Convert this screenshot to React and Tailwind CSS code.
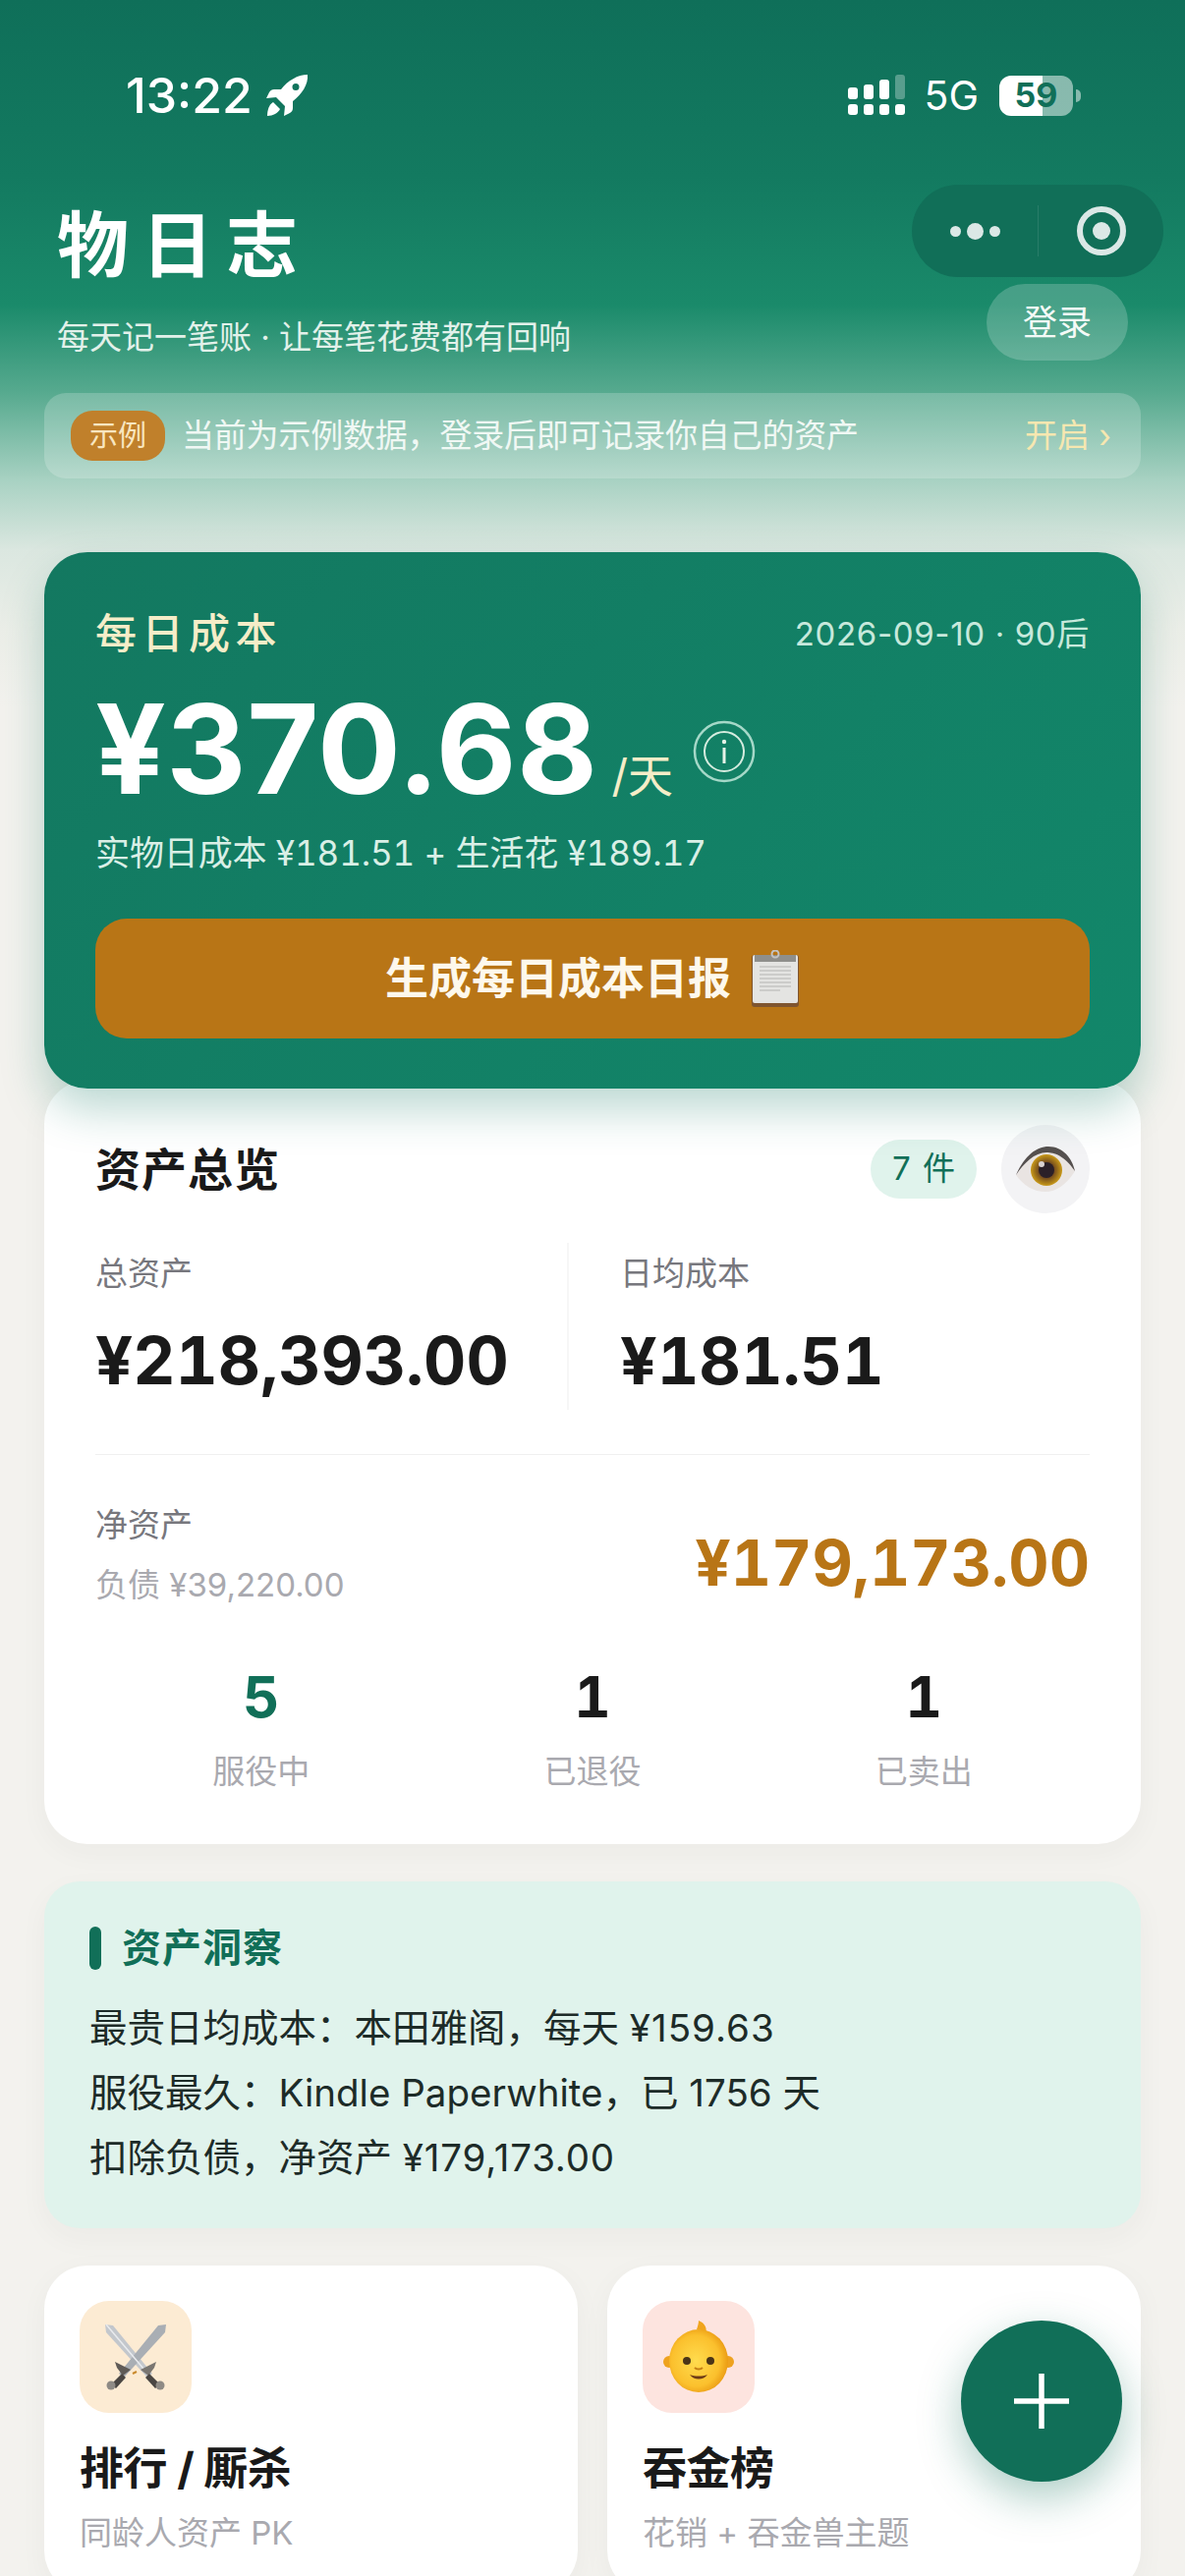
import React from "react";

const FONT = "font-[Inter,'Noto_Sans_CJK_SC',sans-serif]";

function Rocket() {
  return (
    <svg width="44" height="44" viewBox="0 0 44 44" className="ml-[13px]">
      <path
        fillRule="evenodd"
        fill="#fff"
        d="M43 1C33 1 23 7 16 16L9 16C7 16 5 17 4 19L1 25L11 24L20 33L19 43L25 40C27 39 28 37 28 35L28 28C37 21 44 11 43 1ZM31 10A3.5 3.5 0 1 1 31 17A3.5 3.5 0 1 1 31 10Z"
      />
      <path fill="#fff" d="M8 29C4 31 2 37 2 43C8 43 13 40 15 36Z" />
    </svg>
  );
}

function Signal() {
  return (
    <svg width="60" height="42" viewBox="0 0 60 42">
      <rect x="0" y="13" width="10" height="12" rx="3" fill="#fff" />
      <rect x="16" y="10" width="10" height="15" rx="3" fill="#fff" />
      <rect x="32" y="5" width="10" height="20" rx="3" fill="#fff" />
      <rect x="48" y="0" width="10" height="25" rx="3" fill="#fff" fillOpacity="0.3" />
      <rect x="0" y="30" width="10" height="11" rx="3" fill="#fff" />
      <rect x="16" y="30" width="10" height="11" rx="3" fill="#fff" />
      <rect x="32" y="30" width="10" height="11" rx="3" fill="#fff" />
      <rect x="48" y="30" width="10" height="11" rx="3" fill="#fff" />
    </svg>
  );
}

function InfoIcon() {
  return (
    <svg width="64" height="64" viewBox="0 0 64 64" fill="none" className="ml-[20px] mb-[20px]">
      <circle cx="32" cy="32" r="30" stroke="#a5d8c8" strokeWidth="2.5" />
      <circle cx="32" cy="32" r="20" stroke="#d5ecdf" strokeWidth="2" />
      <circle cx="32" cy="22" r="2.2" fill="#e6f3e8" />
      <rect x="30.5" y="28" width="3" height="16" fill="#e6f3e8" />
    </svg>
  );
}

function ClipboardEmoji() {
  return (
    <svg width="50" height="58" viewBox="0 0 50 58" className="ml-[20px]">
      <rect x="1" y="5" width="48" height="53" rx="3" fill="#7f5530" />
      <rect x="2" y="5" width="46" height="49" rx="2" fill="#e4e4e2" />
      <rect x="4" y="5" width="42" height="7" fill="#8f8f8c" />
      <circle cx="25" cy="4" r="3.5" fill="none" stroke="#c4c4c4" strokeWidth="2" />
      <path d="M9 17H41M9 21H41M9 25H41M9 29H41M9 33H41M9 37H41M9 41H30" stroke="#b4b4b2" strokeWidth="1.2" />
    </svg>
  );
}

function EyeEmoji() {
  return (
    <svg width="62" height="48" viewBox="0 0 62 48">
      <defs>
        <radialGradient id="iris" cx="50%" cy="50%" r="50%">
          <stop offset="0.45" stopColor="#6b4320" />
          <stop offset="0.8" stopColor="#a77a18" />
          <stop offset="1" stopColor="#c99a1c" />
        </radialGradient>
      </defs>
      <path d="M1 30C10 10 22 1 34 1C48 1 58 12 61 26C52 40 42 47 31 47C19 47 9 41 1 30Z" fill="#e9e4e2" />
      <path d="M1 30C10 10 22 1 34 1C48 1 58 12 61 26C50 10 40 7 32 7C20 7 9 18 1 30Z" fill="#55504f" />
      <circle cx="32" cy="25" r="16" fill="url(#iris)" />
      <circle cx="32" cy="25" r="8" fill="#2b2028" />
      <circle cx="27" cy="19" r="3" fill="#d9d2d2" />
    </svg>
  );
}

function SwordsEmoji() {
  return (
    <svg width="66" height="70" viewBox="0 0 66 70">
      <path d="M2 2L10 3L50 52L45 56L3 10Z" fill="#c3c7cc" />
      <path d="M64 2L56 3L16 52L21 56L63 10Z" fill="#a9aeb4" />
      <path d="M3 2L47 54" stroke="#e9ebee" strokeWidth="1.5" />
      <path d="M38 48L54 40L52 46L46 54Z" fill="#7a7671" />
      <path d="M28 48L12 40L14 46L20 54Z" fill="#5f5b57" />
      <path d="M47 52L58 63L53 67L43 56Z" fill="#4a4643" />
      <path d="M19 52L8 63L13 67L23 56Z" fill="#4a4643" />
      <circle cx="58" cy="64" r="4.5" fill="#8e8a85" />
      <circle cx="8" cy="64" r="4.5" fill="#8e8a85" />
      <path d="M30 52L34 50" stroke="#c98a2c" strokeWidth="2" />
    </svg>
  );
}

function BabyEmoji() {
  return (
    <svg width="72" height="74" viewBox="0 0 72 74">
      <defs>
        <radialGradient id="babyFace" cx="45%" cy="50%" r="58%">
          <stop offset="0" stopColor="#ffdc4e" />
          <stop offset="0.7" stopColor="#fbc02d" />
          <stop offset="1" stopColor="#e8950f" />
        </radialGradient>
      </defs>
      <circle cx="6" cy="42" r="6" fill="#eea21f" />
      <circle cx="66" cy="42" r="6" fill="#eea21f" />
      <path d="M36 0C43 3 45 8 43 14C41 11 38 9 34 9C35 6 36 3 36 0Z" fill="#f0a51e" />
      <ellipse cx="36" cy="41" rx="30" ry="32" fill="url(#babyFace)" />
      <circle cx="24" cy="41" r="4" fill="#4a3418" />
      <circle cx="48" cy="41" r="4" fill="#4a3418" />
      <path d="M32 48C34 50 38 50 40 48" stroke="#c57f14" strokeWidth="2" fill="none" />
      <path d="M27 55C31 61 41 61 45 55C40 57 32 57 27 55Z" fill="#6d3b16" />
    </svg>
  );
}

function Stat({ value, label, green }) {
  return (
    <div className="flex flex-col items-center">
      <div className={`text-[58px] leading-[60px] font-bold ${green ? "text-[#116f58]" : "text-[#1a1a1a]"}`}>{value}</div>
      <div className="mt-[24px] text-[33px] leading-[44px] text-[#a9a9af]">{label}</div>
    </div>
  );
}

function EntryCard({ icon, iconBg, title, sub }) {
  return (
    <div className="bg-white rounded-[44px] pl-[36px] pt-[36px] pb-[40px] shadow-[0_8px_30px_rgba(60,60,50,0.04)]">
      <div className={`w-[114px] h-[114px] rounded-[30px] flex items-center justify-center ${iconBg}`}>{icon}</div>
      <div className="mt-[29px] text-[45px] leading-[56px] font-bold tracking-[-0.5px] text-[#1a1a1a]">{title}</div>
      <div className="mt-[15px] text-[33px] leading-[44px] text-[#a9a9af]">{sub}</div>
    </div>
  );
}

export default function App() {
  return (
    <div className={`relative w-[1206px] h-[2622px] overflow-hidden text-white bg-[linear-gradient(180deg,#0f6f59_0px,#137a60_180px,#1a8a6a_310px,#57aa8f_400px,#a9d2c3_490px,#dbe7e0_560px,#ebeee8_640px,#f3f2ee_720px)] ${FONT}`}>
      {/* status bar */}
      <div className="flex items-center justify-between pt-[76px] pl-[128px] pr-[106px] h-[118px]">
        <div className="flex items-center">
          <span className="text-[50px] leading-[42px] font-medium">13:22</span>
          <Rocket />
        </div>
        <div className="flex items-center">
          <Signal />
          <span className="ml-[17px] text-[41px] leading-[42px]">5G</span>
          <div className="ml-[21px] w-[75px] h-[41px] rounded-[12px] flex items-center justify-center bg-[linear-gradient(90deg,#fff_59%,rgba(255,255,255,0.5)_59%)] text-[34px] leading-none font-bold text-[#116f58]">
            59
          </div>
          <div className="ml-[3px] w-[5px] h-[13px] rounded-r-full bg-white/50" />
        </div>
      </div>

      {/* mini program capsule */}
      <div className="absolute top-[188px] right-[22px] w-[256px] h-[94px] rounded-[47px] bg-[#116f58] flex items-center">
        <div className="w-[128px] flex items-center justify-center gap-[6px]">
          <span className="w-[11px] h-[11px] rounded-full bg-[#dbe8e6]" />
          <span className="w-[17px] h-[17px] rounded-full bg-[#dbe8e6]" />
          <span className="w-[11px] h-[11px] rounded-full bg-[#dbe8e6]" />
        </div>
        <div className="w-px h-[52px] bg-white/10" />
        <div className="flex-1 flex items-center justify-center">
          <div className="w-[50px] h-[50px] rounded-full border-[6px] border-[#dbe8e6] flex items-center justify-center">
            <span className="w-[18px] h-[18px] rounded-full bg-[#dbe8e6]" />
          </div>
        </div>
      </div>

      {/* header */}
      <div className="mt-[90px] pl-[58px] pr-[58px] flex items-end justify-between">
        <div>
          <div className="text-[73px] leading-[84px] font-bold tracking-[13px]">物日志</div>
          <div className="mt-[29px] text-[33px] leading-[44px] text-[#e2f1ea]">每天记一笔账 · 让每笔花费都有回响</div>
        </div>
        <div className="w-[144px] h-[78px] -mb-[2px] rounded-[39px] bg-white/20 flex items-center justify-center text-[35px] text-[#f4faf7]">登录</div>
      </div>

      {/* sample data notice */}
      <div className="mt-[35px] mx-[45px] h-[87px] rounded-[22px] bg-white/20 flex items-center pl-[27px] pr-[30px]">
        <span className="w-[96px] h-[51px] rounded-[22px] bg-[#c0802b] flex items-center justify-center text-[29px] text-[#f8e6c0]">示例</span>
        <span className="ml-[17px] text-[33px] tracking-[-0.2px] text-[#f0f8f4]">当前为示例数据，登录后即可记录你自己的资产</span>
        <span className="ml-auto text-[33px] text-[#f6e7b0]">开启 ›</span>
      </div>

      {/* daily cost hero */}
      <div className="relative z-10 mt-[75px] mx-[45px] rounded-[44px] px-[52px] pt-[58px] pb-[51px] bg-[linear-gradient(135deg,#137860,#12876a)] shadow-[0_22px_44px_rgba(18,120,96,0.28)]">
        <div className="flex items-center justify-between">
          <span className="text-[42px] leading-[50px] font-medium tracking-[5.5px] text-[#f5edc8]">每日成本</span>
          <span className="text-[33px] leading-[50px] tracking-[0.65px] text-[#c7e9dc]">2026-09-10 · 90后</span>
        </div>
        <div className="mt-[27px] flex items-end h-[120px]">
          <span className="text-[126px] leading-[120px] font-bold tracking-[0.5px] relative top-[5px]">¥370.68</span>
          <span className="ml-[14px] -mb-[2px] text-[46px] leading-[60px] text-[#f5edc8]">/天</span>
          <InfoIcon />
        </div>
        <div className="mt-[26px] text-[35px] leading-[50px] tabular-nums tracking-[-0.1px] text-[#d9efe6]">实物日成本 ¥181.51 + 生活花 ¥189.17</div>
        <div className="mt-[42px] h-[122px] rounded-[32px] bg-[#b87516] flex items-center justify-center">
          <span className="text-[44px] font-semibold text-[#fdf8ec]">生成每日成本日报</span>
          <ClipboardEmoji />
        </div>
      </div>

      {/* overview card */}
      <div className="-mt-[8px] mx-[45px] rounded-[44px] bg-white px-[52px] pt-[60px] pb-[52px] text-[#1a1a1a] tabular-nums shadow-[0_8px_30px_rgba(60,60,50,0.04)]">
        <div className="flex items-center justify-between">
          <span className="text-[46px] leading-[60px] font-bold tracking-[1px]">资产总览</span>
          <div className="flex items-center">
            <span className="w-[108px] h-[60px] rounded-[30px] bg-[#e0f3ec] flex items-center justify-center text-[33px] tracking-[1px] text-[#116f58]">7 件</span>
            <div className="ml-[25px] w-[90px] h-[90px] -my-[15px] rounded-full bg-[#f3f3f5] flex items-center justify-center">
              <EyeEmoji />
            </div>
          </div>
        </div>

        <div className="mt-[45px] grid grid-cols-[480px_1fr]">
          <div className="pt-[9px] pb-[10px]">
            <div className="text-[33px] leading-[44px] text-[#77777d]">总资产</div>
            <div className="mt-[27px] text-[67px] leading-[80px] font-bold">¥218,393.00</div>
          </div>
          <div className="pt-[9px] pb-[10px] pl-[52px] border-l-2 border-[#f6f6f6]">
            <div className="text-[33px] leading-[44px] text-[#77777d]">日均成本</div>
            <div className="mt-[27px] text-[66px] leading-[80px] font-bold">¥181.51</div>
          </div>
        </div>

        <div className="mt-[45px] h-px bg-[#f0f0f0]" />

        <div className="mt-[49px] flex items-center justify-between">
          <div>
            <div className="text-[33px] leading-[44px] text-[#77777d]">净资产</div>
            <div className="mt-[17px] text-[33px] leading-[44px] [font-variant-numeric:normal] text-[#a9a9af]">负债 ¥39,220.00</div>
          </div>
          <div className="pt-[16px] text-[64px] leading-[80px] font-bold text-[#b87516]">¥179,173.00</div>
        </div>

        <div className="mt-[62px] grid grid-cols-3">
          <Stat value="5" label="服役中" green />
          <Stat value="1" label="已退役" />
          <Stat value="1" label="已卖出" />
        </div>
      </div>

      {/* insights */}
      <div className="mt-[38px] mx-[45px] rounded-[36px] bg-[#e0f3ec] px-[46px] pt-[43px] pb-[39px] shadow-[0_10px_30px_rgba(60,60,50,0.04)]">
        <div className="flex items-center">
          <span className="w-[12px] h-[44px] rounded-full bg-[#116f58]" />
          <span className="ml-[21px] text-[40px] leading-[50px] font-semibold tracking-[1px] text-[#116f58]">资产洞察</span>
        </div>
        <div className="mt-[23px] text-[38.5px] leading-[66px] text-[#1d2b28]">
          <div>最贵日均成本：本田雅阁，每天 <span className="tracking-[1px]">¥159.63</span></div>
          <div>服役最久：Kindle Paperwhite，已 1756 天</div>
          <div>扣除负债，净资产 <span className="tracking-[0.8px]">¥179,173.00</span></div>
        </div>
      </div>

      {/* entries */}
      <div className="mt-[38px] mx-[45px] grid grid-cols-2 gap-[30px] text-[#1a1a1a]">
        <EntryCard icon={<SwordsEmoji />} iconBg="bg-[#fcebd3]" title="排行 / 厮杀" sub="同龄人资产 PK" />
        <EntryCard icon={<BabyEmoji />} iconBg="bg-[#fde4df]" title="吞金榜" sub="花销 + 吞金兽主题" />
      </div>

      {/* add button */}
      <div className="absolute left-[978px] top-[2362px] w-[164px] h-[164px] rounded-full bg-[#116f58] flex items-center justify-center shadow-[0_16px_44px_rgba(17,111,88,0.35)]">
        <svg width="56" height="56" viewBox="0 0 56 56">
          <path d="M28 0V56M0 28H56" stroke="#fff" strokeWidth="5.5" />
        </svg>
      </div>
    </div>
  );
}
